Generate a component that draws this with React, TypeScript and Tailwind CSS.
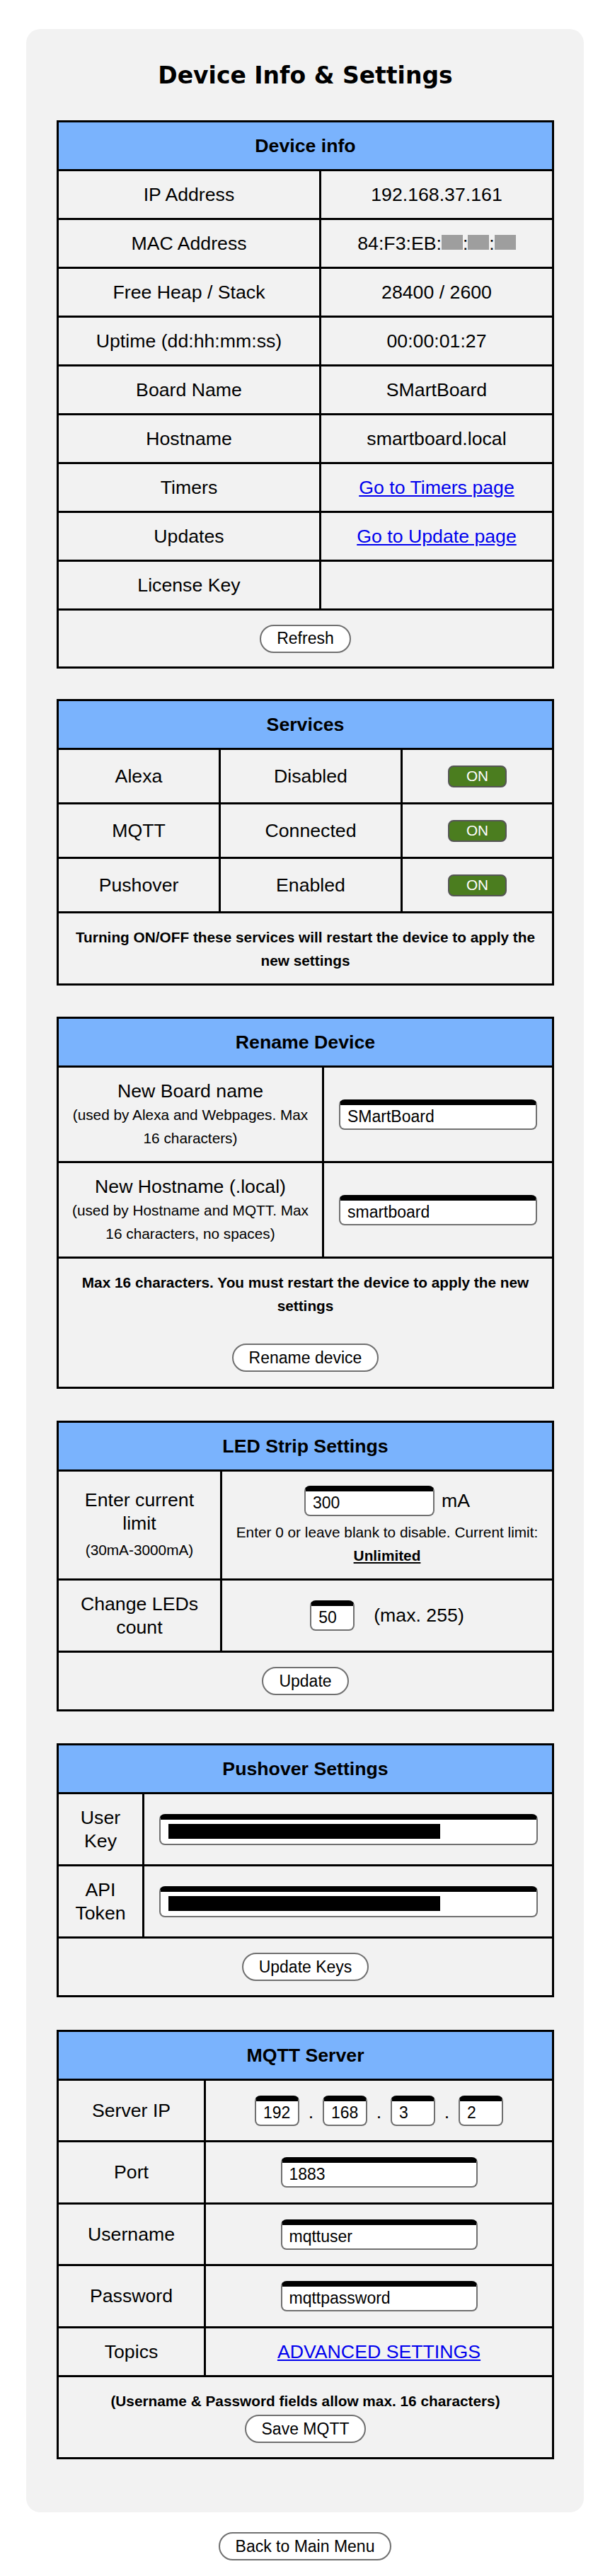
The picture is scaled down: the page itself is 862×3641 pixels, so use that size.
import React from 'react';

const cellBorder = 'border-l-[3px] border-black';

function Table({ title, className, children }: { title: string; className?: string; children: React.ReactNode }) {
  return (
    <div className={`border-[3px] border-black ${className ?? ''}`}>
      <div className="h-[66px] bg-[#7ab3fd] flex items-center justify-center font-bold">{title}</div>
      {children}
    </div>
  );
}

function Row({ className, children }: { className: string; children: React.ReactNode }) {
  return <div className={`flex border-t-[3px] border-black ${className}`}>{children}</div>;
}

function Btn({ children }: { children: React.ReactNode }) {
  return (
    <button className="h-[40px] px-[22px] rounded-full border-2 border-[#707070] bg-white text-[23px] leading-none text-black">
      {children}
    </button>
  );
}

function Field({ value, className }: { value: string; className: string }) {
  return (
    <input
      readOnly
      value={value}
      className={`h-[43px] bg-white border-2 border-[#707070] border-t-[8px] border-t-black rounded-[8px] pl-[10px] text-[23px] text-black outline-none ${className}`}
    />
  );
}

function OnBtn() {
  return (
    <button className="w-[83px] h-[31px] rounded-[8px] border-2 border-[#555555] bg-[#4b7d1f] text-white text-[20.8px] leading-none">
      ON
    </button>
  );
}

const Mask = () => <span className="inline-block w-[30px] h-[21px] bg-[#9e9e9e] align-baseline" />;

const deviceRows: [string, React.ReactNode][] = [
  ['IP Address', '192.168.37.161'],
  [
    'MAC Address',
    <span>
      84:F3:EB:<Mask />:<Mask />:<Mask />
    </span>,
  ],
  ['Free Heap / Stack', '28400 / 2600'],
  ['Uptime (dd:hh:mm:ss)', '00:00:01:27'],
  ['Board Name', 'SMartBoard'],
  ['Hostname', 'smartboard.local'],
  ['Timers', <a className="text-[#0000ee] underline">Go to Timers page</a>],
  ['Updates', <a className="text-[#0000ee] underline">Go to Update page</a>],
  ['License Key', ''],
];

const services: [string, string][] = [
  ['Alexa', 'Disabled'],
  ['MQTT', 'Connected'],
  ['Pushover', 'Enabled'],
];

const center = 'flex items-center justify-center text-center';

export default function App() {
  return (
    <div className="min-h-[3641px] bg-white pt-[41px] font-['Liberation_Sans',Arial,sans-serif] text-[26.7px] leading-[33px] text-black">
      <div className="ml-[37px] w-[788px] rounded-[20px] bg-[#f2f2f2] pl-[43px] pr-[42px] pt-[47px] pb-[75px]">
        <h1 className="h-[38px] mb-[44px] text-center font-['DejaVu_Sans',Verdana,sans-serif] font-bold text-[33px] leading-[38px]">
          Device Info &amp; Settings
        </h1>

        <Table title="Device info">
          {deviceRows.map(([k, v]) => (
            <Row key={k} className="h-[69px]">
              <div className={`w-[368px] ${center}`}>{k}</div>
              <div className={`flex-1 ${cellBorder} ${center}`}>{v}</div>
            </Row>
          ))}
          <Row className="h-[82px]">
            <div className={`flex-1 ${center}`}>
              <Btn>Refresh</Btn>
            </div>
          </Row>
        </Table>

        <Table title="Services" className="mt-[43px]">
          {services.map(([k, v]) => (
            <Row key={k} className="h-[77px]">
              <div className={`w-[226px] ${center}`}>{k}</div>
              <div className={`w-[257px] ${cellBorder} ${center}`}>{v}</div>
              <div className={`flex-1 ${cellBorder} ${center}`}>
                <OnBtn />
              </div>
            </Row>
          ))}
          <Row className="h-[102px]">
            <div className={`flex-1 px-[16px] font-bold text-[20.8px] ${center}`}>
              Turning ON/OFF these services will restart the device to apply the new settings
            </div>
          </Row>
        </Table>

        <Table title="Rename Device" className="mt-[44px]">
          <Row className="h-[135px]">
            <div className={`w-[372px] flex-col ${center}`}>
              <div>New Board name</div>
              <div className="text-[20.8px]">
                (used by Alexa and Webpages. Max
                <br />
                16 characters)
              </div>
            </div>
            <div className={`flex-1 ${cellBorder} ${center}`}>
              <Field value="SMartBoard" className="w-[280px]" />
            </div>
          </Row>
          <Row className="h-[135px]">
            <div className={`w-[372px] flex-col ${center}`}>
              <div>New Hostname (.local)</div>
              <div className="text-[20.8px]">
                (used by Hostname and MQTT. Max
                <br />
                16 characters, no spaces)
              </div>
            </div>
            <div className={`flex-1 ${cellBorder} ${center}`}>
              <Field value="smartboard" className="w-[280px]" />
            </div>
          </Row>
          <Row className="h-[184px]">
            <div className="flex-1 flex flex-col items-center pt-[17px] px-[16px]">
              <div className="font-bold text-[20.8px] text-center">
                Max 16 characters. You must restart the device to apply the new settings
              </div>
              <div className="mt-[37px]">
                <Btn>Rename device</Btn>
              </div>
            </div>
          </Row>
        </Table>

        <Table title="LED Strip Settings" className="mt-[45px]">
          <Row className="h-[154px]">
            <div className={`w-[228px] flex-col ${center}`}>
              <div>
                Enter current
                <br />
                limit
              </div>
              <div className="mt-[4px] text-[20.8px]">(30mA-3000mA)</div>
            </div>
            <div className={`flex-1 ${cellBorder} flex flex-col items-center pt-[20px]`}>
              <div className="flex items-center">
                <Field value="300" className="w-[184px]" />
                <span className="ml-[10px]">mA</span>
              </div>
              <div className="mt-[6px] text-[20.8px] text-center">
                Enter 0 or leave blank to disable. Current limit:
                <br />
                <u className="font-bold">Unlimited</u>
              </div>
            </div>
          </Row>
          <Row className="h-[102px]">
            <div className={`w-[228px] ${center}`}>
              Change LEDs
              <br />
              count
            </div>
            <div className={`flex-1 ${cellBorder} ${center}`}>
              <Field value="50" className="w-[63px]" />
              <span className="ml-[27px]">(max. 255)</span>
            </div>
          </Row>
          <Row className="h-[83px]">
            <div className={`flex-1 ${center}`}>
              <Btn>Update</Btn>
            </div>
          </Row>
        </Table>

        <Table title="Pushover Settings" className="mt-[45px]">
          {['User Key', 'API Token'].map((k) => (
            <Row key={k} className="h-[102px]">
              <div className={`w-[118px] ${center}`}>
                {k.split(' ')[0]}
                <br />
                {k.split(' ')[1]}
              </div>
              <div className={`flex-1 ${cellBorder} ${center}`}>
                <div className="w-[535px] h-[44px] flex items-center bg-white border-2 border-[#707070] border-t-[8px] border-t-black rounded-[8px] pl-[11px]">
                  <div className="w-[384px] h-[21px] bg-black" />
                </div>
              </div>
            </Row>
          ))}
          <Row className="h-[83px]">
            <div className={`flex-1 ${center}`}>
              <Btn>Update Keys</Btn>
            </div>
          </Row>
        </Table>

        <Table title="MQTT Server" className="mt-[46px]">
          <Row className="h-[87px]">
            <div className={`w-[205px] ${center}`}>Server IP</div>
            <div className={`flex-1 ${cellBorder} flex items-center justify-center`}>
              <div className="flex items-baseline">
                <Field value="192" className="w-[63px]" />
                <span className="w-[33px] text-center">.</span>
                <Field value="168" className="w-[63px]" />
                <span className="w-[33px] text-center">.</span>
                <Field value="3" className="w-[63px]" />
                <span className="w-[33px] text-center">.</span>
                <Field value="2" className="w-[63px]" />
              </div>
            </div>
          </Row>
          {[
            ['Port', '1883', 'h-[88px]'],
            ['Username', 'mqttuser', 'h-[87px]'],
            ['Password', 'mqttpassword', 'h-[88px]'],
          ].map(([k, v, h]) => (
            <Row key={k} className={h}>
              <div className={`w-[205px] ${center}`}>{k}</div>
              <div className={`flex-1 ${cellBorder} ${center}`}>
                <Field value={v} className="w-[278px]" />
              </div>
            </Row>
          ))}
          <Row className="h-[69px]">
            <div className={`w-[205px] ${center}`}>Topics</div>
            <div className={`flex-1 ${cellBorder} ${center}`}>
              <a className="text-[#0000ee] underline">ADVANCED SETTINGS</a>
            </div>
          </Row>
          <Row className="h-[116px]">
            <div className="flex-1 flex flex-col items-center pt-[17px]">
              <div className="font-bold text-[20.8px] text-center">
                (Username &amp; Password fields allow max. 16 characters)
              </div>
              <div className="mt-[3px]">
                <Btn>Save MQTT</Btn>
              </div>
            </div>
          </Row>
        </Table>
      </div>

      <div className="mt-[28px] flex justify-center">
        <Btn>Back to Main Menu</Btn>
      </div>
    </div>
  );
}
